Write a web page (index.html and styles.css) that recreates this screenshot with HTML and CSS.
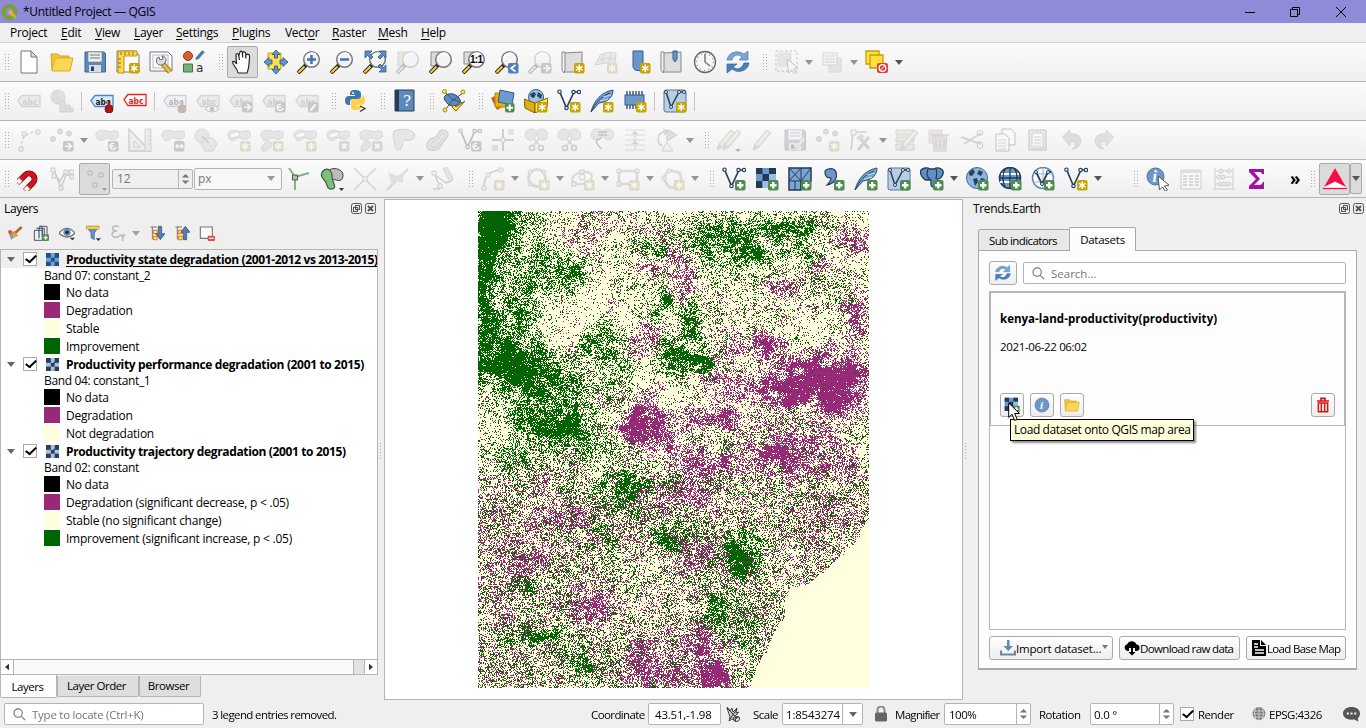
FILE: index.html
```html
<!DOCTYPE html>
<html lang="en">
<head>
<meta charset="utf-8">
<title>*Untitled Project — QGIS</title>
<link rel="stylesheet" href="styles.css">
</head>
<body>
<div class="window">
  <header class="titlebar">
    <svg class="logo" viewBox="0 0 18 18"><circle cx="8.500" cy="9" r="6" fill="none" stroke="#7a9f35" stroke-width="4"/><path d="M9 9l3 0 4 5-2 2-5-4z" fill="#a8b83c"/><path d="M7.500 7l4.500 1-1 1.500 3 3-1.500 1.500-3-3L8 12z" fill="#f0a64c"/></svg>
    <span class="caption">*Untitled Project — QGIS</span>
    <svg class="winbtns" viewBox="0 0 110 20"><path d="M5 10.500h10" stroke="#000"/><path d="M50.500 7.500h7v7h-7zM52.500 7v-1.500h7v7h-1.500" fill="none" stroke="#000"/><path d="M96 5l10 10M106 5l-10 10" stroke="#000"/></svg>
  </header>
  <nav class="menubar">
    <span class="m1">Pro<u>j</u>ect</span><span class="m2"><u>E</u>dit</span><span class="m3"><u>V</u>iew</span><span class="m4"><u>L</u>ayer</span><span class="m5"><u>S</u>ettings</span><span class="m6"><u>P</u>lugins</span><span class="m7">Vect<u>o</u>r</span><span class="m8"><u>R</u>aster</span><span class="m9"><u>M</u>esh</span><span><u>H</u>elp</span>
  </nav>
  <div class="toolbar" data-items="| new open save layout+n wrench style | !hand pan zin zout zfull ~zsel zlayer znat zlast+l ~zlast+r map+n ~mesh+n mark+n book clock refresh | ~select v ~form v desel v"></div>
  <div class="toolbar" data-items="| ~label ~diagram / labpin labred / ~labpin ~labeye ~label+r ~label+c ~label+p | python | help | topo | dsm gpkg+n vec+n feather+n chip+n / shp+n /"></div>
  <div class="toolbar" data-items="| ~curve ~points+r v ~blob+c ~ruler ~blob+m ~simplify ~ring+n ~part+n ~ring+n ~ring+x ~part+x ~reshape ~offset ~vec+c ~splitx ~cut ~cut ~merge ~align ~rotate v | ~pencils ~pencil ~saveedit ~points+n ~vertex v ~attrs ~trash2 ~scissors ~copy ~paste ~undo ~redo"></div>
  <div class="toolbar last">
    <div class="tools" data-items="| magnet ~vsnap !dots"></div>
    <div class="spin tol">12<svg class="updown" viewBox="0 0 14 18"><path d="M3 7.500l4-4 4 4zM3 10.500l4 4 4-4z"/></svg></div>
    <div class="combo unit">px<svg viewBox="0 0 8 5"><path d="M0 0h8L4 5z"/></svg></div>
    <div class="tools" data-items="tracing green ~cross ~avoid v ~selftrace"></div>
    <div class="tools shift" data-items="| ~arc+n v ~circle+n v ~ellipse+n v ~rect+n v ~poly+n v | vec+a raster+a meshl+a comma+a feather+a shp+a elephant+a v globe+a wms+a wfs+a vec+n v"></div>
    <div class="tools info" data-items="| identify ~table ~abacus sigma"></div>
    <span class="more">»</span>
    <div class="tools" data-items="| !trends"></div>
    <div class="drop"><svg viewBox="0 0 8 5"><path d="M0 0h8L4 5z"/></svg></div>
  </div>

  <main class="main">
    <section class="left">
      <div class="dockhead"><span>Layers</span><svg class="dockbtns" viewBox="0 0 26 12"><rect x=".5" y=".5" width="10" height="10" rx="2"/><rect x="4.500" y="2.500" width="4" height="4"/><rect x="2.500" y="4.500" width="4" height="4"/><rect x="14.500" y=".5" width="10" height="10" rx="2"/><path d="M17 3l5 5M22 3l-5 5" stroke-width="2"/></svg></div>
      <div class="minibar" data-mini="brush addgroup eye filter ~eps v expand collapse remove"></div>
      <div class="tree">
        <div class="rows">
          <div class="layer current"><i class="tw"></i><i class="chk"></i><i class="ras b"></i><b class="l1"><u>Productivity state degradation (2001-2012 vs 2013-2015)</u></b></div>
          <div class="band">Band 07: constant_2</div>
          <div class="entry"><i class="k"></i>No data</div><div class="entry"><i class="p"></i>Degradation</div><div class="entry"><i class="y"></i>Stable</div><div class="entry"><i class="g"></i>Improvement</div>
          <div class="layer"><i class="tw"></i><i class="chk"></i><i class="ras"></i><b class="l2">Productivity performance degradation (2001 to 2015)</b></div>
          <div class="band">Band 04: constant_1</div>
          <div class="entry"><i class="k"></i>No data</div><div class="entry"><i class="p"></i>Degradation</div><div class="entry"><i class="y"></i>Not degradation</div>
          <div class="layer"><i class="tw"></i><i class="chk"></i><i class="ras"></i><b class="l3">Productivity trajectory degradation (2001 to 2015)</b></div>
          <div class="band">Band 02: constant</div>
          <div class="entry"><i class="k"></i>No data</div><div class="entry"><i class="p"></i>Degradation (significant decrease, p &lt; .05)</div><div class="entry"><i class="y"></i>Stable (no significant change)</div><div class="entry"><i class="g"></i>Improvement (significant increase, p &lt; .05)</div>
        </div>
        <div class="hscroll"><svg viewBox="0 0 5 8"><path d="M5 0v8L0 4z"/></svg><span></span><em></em><svg viewBox="0 0 5 8"><path d="M0 0v8l5-4z"/></svg></div>
      </div>
      <div class="tabs-bottom"><span class="on">Layers</span><span class="lo">Layer Order</span><span class="br">Browser</span></div>
    </section>
    <div class="splitter"></div>
    <section class="mapview"><canvas id="map" width="391" height="477"></canvas></section>
    <div class="splitter wide"></div>
    <section class="right">
      <div class="dockhead"><span>Trends.Earth</span><svg class="dockbtns" viewBox="0 0 26 12"><rect x=".5" y=".5" width="10" height="10" rx="2"/><rect x="4.500" y="2.500" width="4" height="4"/><rect x="2.500" y="4.500" width="4" height="4"/><rect x="14.500" y=".5" width="10" height="10" rx="2"/><path d="M17 3l5 5M22 3l-5 5" stroke-width="2"/></svg></div>
      <div class="tabs-top"><span class="sub">Sub indicators</span><span class="on">Datasets</span></div>
      <div class="pane">
        <div class="searchrow">
          <button class="btn refresh" data-icon="refresh"></button>
          <div class="field search"><svg viewBox="0 0 14 14"><circle cx="5.500" cy="5.500" r="4.500"/><path d="M9 9l4 4"/></svg>Search...</div>
        </div>
        <div class="list">
          <article class="card">
            <h3>kenya-land-productivity(productivity)</h3>
            <p>2021-06-22 06:02</p>
            <div class="actions">
              <button class="btn sq" data-icon="raster+a"></button><button class="btn sq" data-icon="infoc"></button><button class="btn sq" data-icon="open"></button><button class="btn sq del" data-icon="trashred"></button>
              <div class="tip">Load dataset onto QGIS map area</div>
              <svg class="cursor" viewBox="0 0 13 20"><path d="M.7 1v14.500l3.400-3.200 2.500 6.200 2.600-1.100-2.500-5.900h4.700z" fill="#fff" stroke="#000"/></svg>
            </div>
          </article>
        </div>
        <div class="btnrow">
          <button class="btn b1"><svg viewBox="0 0 16 16"><path d="M7 0h2.500v6H13L8.200 11 3.500 6H7z" fill="#5a8abf"/><path d="M1 10.500v4h14v-4" fill="none" stroke="#6b87a8" stroke-width="2.200"/></svg><span>Import dataset...</span><i class="arr"></i></button>
          <button class="btn b2"><svg viewBox="0 0 16 16"><path d="M3.500 11a3.500 3.500 0 01-.3-6.800A5 5 0 0112.500 4.500a3.300 3.300 0 01.5 6.500H11V8H5v3z"/><path d="M7 8h2v4h2.500L8 15.500 4.500 12H7z"/></svg><span>Download raw data</span></button>
          <button class="btn b3"><svg viewBox="0 0 16 16"><path d="M1 0h8v6h6v10H1zM10 0l5 5h-5z"/><path d="M3 4h4M3 7h4M4 10h9M4 13h9" stroke="#fff" stroke-width="1.300"/></svg><span>Load Base Map</span></button>
        </div>
      </div>
    </section>
  </main>

  <footer class="status">
    <div class="field locate"><svg viewBox="0 0 14 14"><circle cx="5.500" cy="5.500" r="4.500"/><path d="M9 9l4 4"/></svg>Type to locate (Ctrl+K)</div>
    <span class="msg">3 legend entries removed.</span>
    <span class="lb coord">Coordinate</span><div class="field f1">43.51,-1.98</div>
    <svg class="extents" viewBox="0 0 16 16"><path d="M2 2l3 3 2-3 1 4 4-4-1 5 3-1-4 4 4 1-4 1 1 3-4-2-3 2 1-4z" fill="#ccc" stroke="#333" stroke-width=".9"/><path d="M2 1l10 12M12 3L5 13" stroke="#333"/><path d="M9 11a3 3 0 105 0" fill="none" stroke="#333"/></svg>
    <span class="lb scale">Scale</span><div class="field f2">1:8543274<em><svg viewBox="0 0 8 5"><path d="M0 0h8L4 5z"/></svg></em></div>
    <svg class="lock" viewBox="0 0 12 16"><path d="M2.500 7V4a3.500 3.500 0 017 0v3" fill="none" stroke="#888" stroke-width="2"/><rect y="6.500" width="12" height="9" rx="1.500" fill="#666"/></svg>
    <span class="lb mag">Magnifier</span><div class="spin f3">100%<svg class="updown" viewBox="0 0 14 18"><path d="M3 7.500l4-4 4 4zM3 10.500l4 4 4-4z"/></svg></div>
    <span class="lb rot">Rotation</span><div class="spin f4">0.0 °<svg class="updown" viewBox="0 0 14 18"><path d="M3 7.500l4-4 4 4zM3 10.500l4 4 4-4z"/></svg></div>
    <i class="chk"></i><span class="lb render">Render</span>
    <svg class="crs" viewBox="0 0 16 16"><circle cx="8" cy="7.500" r="6.500" fill="#777"/><path d="M1 5h14M0 8h16M2 11h12M8 1v14M5 1.500q-3 6 0 12M11 1.500q3 6 0 12" fill="none" stroke="#ddd" stroke-width=".8"/></svg>
    <span class="lb epsg">EPSG:4326</span>
    <svg class="bubble" viewBox="0 0 16 16"><path d="M8 1c4.500 0 8 2.500 8 6 0 2-1 3.500-2 4.500l.5 3-4-1.800C4.500 13.500 0 11 0 7c0-3.500 3.500-6 8-6z" fill="#555"/><path d="M3.500 7h2M7 7h2M10.500 7h2" stroke="#eee" stroke-width="2"/></svg>
  </footer>
</div>
<script src="app.js"></script>
</body>
</html>
```
FILE: styles.css
```css
* { box-sizing: border-box; }
body { margin: 0; font: 12px/16px "Open Sans", "Noto Sans", sans-serif; color: #000; background: #efefef; overflow: hidden; }
u { text-underline-offset: 2px; }
.window { width: 1366px; height: 728px; display: flex; flex-direction: column; }
.titlebar { height: 23px; background: #8f8bd8; display: flex; align-items: center; flex: none; }
.logo { width: 18px; height: 18px; margin-left: 1px; }
.caption { margin-left: 4px; letter-spacing: -.32px; }
.winbtns { width: 110px; height: 20px; margin-left: auto; margin-right: 16px; }
.menubar { height: 20px; flex: none; border-bottom: 1px solid #d3d3d3; display: flex; align-items: center; padding-left: 10px; letter-spacing: -.28px; }
.menubar span { white-space: nowrap; }
.m1 { width: 51px; } .m2 { width: 34px; } .m3 { width: 39px; } .m4 { width: 42px; } .m5 { width: 56px; }
.m6 { width: 53px; } .m7 { width: 47px; } .m8 { width: 46px; } .m9 { width: 43px; }
.toolbar { height: 39px; flex: none; margin: 0; padding-left: 0; border-bottom: 1px solid #b5b5b5; background: linear-gradient(#fbfbfb, #efefef); display: flex; align-items: center; overflow: hidden; }
.toolbar.last { height: 38px; }
.tools { display: flex; align-items: center; flex: none; }
.handle { width: 16px; height: 18px; flex: none; display: flex; justify-content: center; padding-left: 4px; }
.handle::after { content: ""; width: 5px; height: 17px; background: radial-gradient(circle, #aaa 0 .7px, transparent 1px) 0 0 / 3px 3px; }
.toolbar > .handle:first-child, .tools:first-child > .handle:first-child { margin-left: -4px; }
.slot { width: 33px; height: 32px; flex: none; display: flex; align-items: center; justify-content: center; }
.slot.on { width: 31px; margin: 0 1px; background: #dbdbdb; border: 1px solid #aaa; border-radius: 2px; }
.slot svg { width: 24px; height: 24px; }
.slot.off svg { opacity: .3; filter: grayscale(.6); }
.arrow { width: 12px; flex: none; display: flex; justify-content: center; }
.arrow svg, .drop svg { width: 8px; height: 5px; fill: #555; }
.arrow.off svg { opacity: .6; }
.sep { width: 7px; height: 19px; flex: none; display: flex; justify-content: center; }
.sep::after { content: ""; width: 1px; background: #c4c4c4; }
.spin, .combo, .field { border: 1px solid #b4b4b4; border-radius: 2px; background: #fff; display: flex; align-items: center; white-space: nowrap; flex: none; }
.updown { width: 14px; height: 18px; fill: #777; margin-left: auto; border-left: 1px solid #b4b4b4; flex: none; }
.tol { width: 81px; height: 20px; margin-left: 1px; background: #efefef; color: #777; padding-left: 4px; }
.unit { width: 88px; height: 22px; margin-left: 1px; color: #777; padding: 0 6px 0 3px; background: #f7f7f7; justify-content: space-between; }
.unit svg { width: 8px; height: 5px; fill: #999; }
.shift { margin-left: 1px; }
.info { margin-left: 21px; }
.more { width: 29px; padding-left: 17px; font-size: 17px; font-weight: 700; flex: none; line-height: 12px; }
.drop { width: 12px; height: 31px; margin-left: -1px; background: #dbdbdb; border: 1px solid #aaa; border-radius: 2px; display: flex; align-items: center; justify-content: center; }

.main { flex: 1; display: flex; min-height: 0; }
.left { width: 378px; display: flex; flex-direction: column; flex: none; }
.dockhead { height: 22px; display: flex; align-items: center; justify-content: space-between; flex: none; padding: 0 1px 0 4px; letter-spacing: -.35px; }
.dockbtns { width: 26px; height: 12px; fill: none; stroke: #555; }
.minibar { height: 29px; display: flex; align-items: center; padding: 0 0 3px 3px; flex: none; }
.minibar svg { width: 16px; height: 16px; margin: 0 5px 0 4px; flex: none; }
.minibar svg:nth-child(-n+4) { margin-right: 6px; }
.minibar .off { opacity: .35; margin-right: 0; }
.minibar .arrow { width: 11px; margin: 0 4px 0 3px; }
.minibar .arrow svg { width: 8px; height: 5px; margin: 0; opacity: .5; }
.tree { border: 1px solid #b5b5b5; background: #fff; height: 426px; display: flex; flex-direction: column; overflow: hidden; flex: none; }
.rows { flex: 1; overflow: hidden; }
.layer { height: 18px; display: flex; align-items: center; white-space: nowrap; }
.layer.current { background: #efefef; }
.layer b { margin-left: 7px; flex: none; padding-top: 2px; }
.l1, .l3 { letter-spacing: -.36px; } .l2 { letter-spacing: -.35px; }
.tw { margin-left: 6px; border: 4px solid transparent; border-top: 5px solid #666; border-bottom: 0; flex: none; }
.chk { width: 14px; height: 14px; border: 1px solid #aaa; background: #fff; margin-left: 8px; flex: none; display: block; }
.chk::after { content: ""; display: block; width: 4px; height: 8px; margin: 0 0 0 4px; border: solid #000; border-width: 0 2px 2px 0; transform: rotate(38deg) skewX(-8deg); }
.ras { width: 13px; height: 13px; margin-left: 9px; flex: none; background: conic-gradient(#a9c2e2 25%, #2c3e57 0 50%, #a9c2e2 0 75%, #2c3e57 0) 0 0 / 8.670px 8.670px; }
.ras.b { background-image: conic-gradient(#6ba3dc 25%, #24507e 0 50%, #6ba3dc 0 75%, #24507e 0); }
.band { height: 15px; line-height: 15px; padding-left: 43px; letter-spacing: -.35px; }
.entry { height: 18px; display: flex; align-items: center; padding: 2px 0 0 43px; letter-spacing: -.25px; white-space: nowrap; }
.entry i { width: 16px; height: 16px; margin: -2px 6px 0 0; }
.k { background: #000; } .p { background: #992878; } .y { background: #ffffdf; } .g { background: #006400; }
.hscroll { height: 15px; border-top: 1px solid #b5b5b5; display: flex; align-items: center; background: #fff; }
.hscroll svg { width: 4px; height: 8px; margin: 0 4px; fill: #333; }
.hscroll span { flex: 1; height: 14px; border: 1px solid #b5b5b5; border-width: 0 1px; background: #fafafa; }
.hscroll em { width: 11px; height: 14px; background: #e2e2e2; border-right: 1px solid #b5b5b5; }
.tabs-bottom { display: flex; align-items: flex-start; letter-spacing: -.45px; height: 23px; padding-top: 1px; flex: none; }
.tabs-bottom span { border: 1px solid #b5b5b5; border-top: 0; background: #dedede; height: 21px; text-align: center; padding-top: 2px; border-radius: 0 0 2px 2px; font-size: 11.500px; }
.tabs-bottom .on { background: #fdfdfd; width: 57px; height: 23px; padding: 4px 2px 0 0; margin-top: -1px; }
.tabs-bottom .lo { width: 82px; padding-right: 3px; } .tabs-bottom .br { width: 62px; padding-right: 3px; }
.splitter { width: 6px; background: radial-gradient(circle, #aaa 0 .7px, transparent 1px) 1px 1px / 3px 3px; background-clip: content-box; padding: 245px 2px 241px 1px; flex: none; }
.splitter.wide { width: 7px; }
.mapview { width: 579px; height: 501px; margin-top: 1px; border: 1px solid #b5b5b5; background: #fff; flex: none; padding: 11px 0 0 93px; }
#map { display: block; image-rendering: pixelated; }
.right { flex: 1; display: flex; flex-direction: column; }
.right .dockhead { padding: 0 0 0 3px; }
.right .dockbtns { margin-right: 1px; }
.tabs-top { display: flex; align-items: flex-end; height: 31px; padding-left: 8px; margin-bottom: -1px; z-index: 1; letter-spacing: -.25px; }
.tabs-top span { border: 1px solid #a9a9a9; border-radius: 2px 2px 0 0; text-align: center; background: #e8e8e8; height: 22px; padding-top: 3px; font-size: 11.500px; }
.tabs-top .sub { width: 92px; padding-right: 2px; letter-spacing: -.6px; }
.tabs-top .on { width: 67px; height: 24px; background: #fdfdfd; border-bottom: 0; margin-left: -1px; padding-top: 4px; }
.pane { width: 379px; height: 420px; margin-left: 8px; border: 1px solid #a9a9a9; border-bottom-width: 2px; background: #fdfdfd; padding: 10px 10px 8px; display: flex; flex-direction: column; }
.btn { border: 1px solid #aaa; border-radius: 3px; background: linear-gradient(#fff, #ededed); display: flex; align-items: center; padding: 0; font: inherit; color: #000; }
.searchrow { display: flex; align-items: center; gap: 6px; height: 24px; }
.refresh { width: 28px; height: 24px; justify-content: center; }
.refresh svg { width: 16px; height: 16px; }
.search { flex: 1; height: 22px; color: #777; font-size: 11.500px; padding-top: 1px; }
.field > svg:first-child { width: 13px; height: 13px; fill: none; stroke: #777; stroke-width: 1.200; margin: 0 6px 0 8px; }
.list { margin-top: 6px; height: 339px; border: 1px solid #b5b5b5; background: #fff; }
.card { height: 135px; margin: -1px; border: 2px solid #b5b5b5; border-bottom-width: 1px; background: #fdfdfd; padding: 18px 9px 0; }
.card h3 { margin: 0; font-size: 11.500px; line-height: 16px; letter-spacing: .02px; }
.card p { margin: 12px 0 0; font-size: 11.500px; letter-spacing: -.35px; }
.actions { display: flex; gap: 6px; margin-top: 38px; position: relative; }
.sq { width: 24px; height: 24px; justify-content: center; }
.sq svg { width: 16px; height: 16px; }
.del { margin-left: auto; }
.tip { position: absolute; left: 10px; top: 26px; width: 184px; height: 22px; border: 1px solid #000; background: #ffffdc; padding: 2px 3px; white-space: nowrap; box-shadow: 2px 2px 2px rgba(0,0,0,.45); letter-spacing: -.4px; }
.cursor { position: absolute; left: 8px; top: 9px; width: 13px; height: 20px; }
.btnrow { display: flex; gap: 6px; margin-top: 6px; }
.btnrow .btn { height: 24px; font-size: 11.500px; letter-spacing: -.2px; white-space: nowrap; padding-top: 1px; }
.btnrow svg { width: 16px; height: 16px; flex: none; margin-top: -1px; }
.btnrow .b1 { width: 124px; padding-left: 10px; }
.btnrow .b2 { width: 121px; padding-left: 4px; letter-spacing: -.65px; }
.btnrow .b3 { width: 100px; padding-left: 4px; letter-spacing: -.65px; }
.arr { border: 3px solid transparent; border-top: 4px solid #777; border-bottom: 0; margin: -3px 0 0 1px; }

.status { height: 26px; flex: none; display: flex; align-items: flex-start; padding: 1px 0 0 4px; font-size: 11.500px; letter-spacing: -.2px; line-height: 16px; }
.status > * { flex: none; white-space: nowrap; }
.status .field, .status .spin { height: 22px; padding-top: 1px; }
.status > span { padding-top: 4px; letter-spacing: -.5px; }
.status .locate { width: 200px; color: #777; letter-spacing: -.25px; }
.status .msg { width: 379px; margin-left: 8px; letter-spacing: -.62px; }
.status .coord { width: 57px; letter-spacing: -.6px; } .f1 { width: 73px; padding-left: 6px; }
.extents { width: 16px; height: 16px; margin: 3px 0 0 4px; }
.scale { margin-left: 12px; width: 29px; }
.f2 { width: 81px; padding-left: 3px; }
.f2 em { margin-left: auto; width: 20px; height: 20px; border-left: 1px solid #b4b4b4; display: flex; align-items: center; justify-content: center; margin-top: -1px; }
.f2 em svg { width: 8px; height: 5px; fill: #666; }
.lock { width: 12px; height: 16px; margin: 3px 0 0 12px; }
.status .mag { margin-left: 8px; width: 49px; letter-spacing: -.7px; } .f3 { width: 87px; padding-left: 4px; letter-spacing: -.5px; }
.status .updown { height: 20px; margin-top: -1px; }
.rot { margin-left: 8px; width: 51px; } .f4 { width: 84px; padding-left: 3px; }
.status > .chk { margin: 4px 0 0 6px; }
.render { margin-left: 4px; width: 53px; }
.crs { width: 16px; height: 16px; margin-top: 3px; }
.epsg { margin-left: 2px; width: 74px; }
.bubble { width: 17px; height: 17px; margin-top: 3px; }
```
FILE: app.js
```js
const glass = '<path d="M1 23l8-8" stroke="#222" stroke-width="4"/><path d="M1.500 22.500l6-6" stroke="#fc3" stroke-width="2.200"/><circle cx="14.500" cy="9.500" r="7.800" fill="#f3f3f3" stroke="#777" stroke-width="1.500"/><path d="M9 8a6 6 0 0110-3" fill="none" stroke="#fff" stroke-width="2"/>';
const tag = (c, bg, t = '') => `<path d="M1 11.500l4-5h18v11H5z" fill="${bg}" stroke="${c}" stroke-width="1.300"/><text x="5.500" y="15.500" font-size="9.500" font-weight="700" fill="${t || c}" font-family="DejaVu Sans" textLength="15" lengthAdjust="spacingAndGlyphs">abc</text>`;
const pin = '<path d="M19 12v7" stroke="#999" stroke-width="4"/><circle cx="19" cy="20" r="4" fill="#b3131c" stroke="#7c1015"/><path d="M19 12v6" stroke="#b3131c" stroke-width="2"/>';
const blob = '<path d="M1 8C0 3 6 1 11 3s9-2 12 1-1 9-7 7-4-1-8 1-6-1-7-4z" fill="#b9c2b9" stroke="#8c948c"/>';
const vec = '<path d="M2.500 2.500L9.500 19 17 3h5" fill="none" stroke="#27425f" stroke-width="1.700"/><g fill="#fff" stroke="#27425f" stroke-width="1.200"><circle cx="2.500" cy="2.700" r="1.700"/><circle cx="9.500" cy="19" r="1.700"/><circle cx="16.500" cy="3" r="1.700"/><circle cx="22" cy="3" r="1.700"/></g>';
const floppy = '<path d="M2 2h19l1.500 1.500V22H2z" fill="#5b8abd" stroke="#3c6492"/><path d="M5 2h14v10H5z" fill="#eee" stroke="#777" stroke-width=".6"/><path d="M7 5h10M7 8h10" stroke="#777"/><path d="M6 15h12v7H6z" fill="#ddd"/><path d="M8 16.500h3V21H8z" fill="#27425f"/>';
const folder = '<path d="M2 20L1 4h7l2 2h9v3" fill="#f2c73c" stroke="#d3a21c"/><path d="M2 20L5 8h18l-3 13H2z" fill="#fcd755" stroke="#d9aa27"/>';
const pencil = '<path d="M3 22l2-6L17 2l4 3L9 19z" fill="#cfc9a3" stroke="#8c8770"/><path d="M3 22l2-6 4 3z" fill="#a98"/><path d="M7 17L18 4" stroke="#fff"/>';
const scroll = '<path d="M3 3v19h18V2z" fill="#ddd" stroke="#888"/><path d="M1 2h3v18l-1 3-2-3z" fill="#f4f4f4" stroke="#888"/>';
const cursor = '<path d="M12 9l11 9-4.500 1 3 4-2 1.500-3-4.500-3 3z" fill="#fff" stroke="#555"/>';
const sheet = '<path d="M4 1h10l6 6v16H4z" fill="#fff" stroke="#777"/><path d="M14 1v6h6z" fill="#ddd" stroke="#777"/>';
const feather = '<path d="M1 23C4 11 12 3 23 1c0 7-5 12-14 13z" fill="#78a3d4" stroke="#315277"/><path d="M1 23C5 14 12 7 20 4" fill="none" stroke="#27425f"/><path d="M10 12l8-2M13 8l8-2" stroke="#c5daf0"/>';
const scissorsTail = '<path d="M10 11l5 6M15 11l-5 6" stroke="#888" stroke-width="1.500"/><circle cx="8" cy="20" r="2.500" fill="none" stroke="#a66" stroke-width="1.500"/><circle cx="17" cy="20" r="2.500" fill="none" stroke="#a66" stroke-width="1.500"/>';
const lobes = '<path d="M12 8c-2 5-8 5-10 2S1 1 7 1s6 3 5 7zM13 8c2 5 8 5 10 2s0-9-5-9-6 3-5 7z" fill="#b9c2b9" stroke="#8c948c"/>';
const lines = (y0, n, x0 = 8, x1 = 17, step = 3) => `<path d="${Array.from({ length: n }, (_, i) => `M${x0} ${y0 + i * step}H${x1}`).join('')}" stroke="#888"/>`;
const globeShape = '<circle cx="12" cy="11" r="10.500" fill="#8fb4dd" stroke="#416c9b"/>';

const ICONS = {
  new: sheet, open: folder, save: floppy, vec, feather, pencil,
  layout: '<path d="M1 1h18l4 4v17H1z" fill="#fff" stroke="#777"/><path d="M2 1h19v5H8v17H2z" fill="#ffd84c" stroke="#b79313"/><path d="M5 2v3M9 2v3M13 2v3M17 2v3M2 9h3M2 13h3M2 17h3" stroke="#8a6f10"/>',
  wrench: '<path d="M1 2h18l4 4v15H1z" fill="#fff" stroke="#777"/><path d="M4 5h15v13H4z" fill="none" stroke="#9db9da"/><path d="M14 14l7 8" stroke="#a77b00" stroke-width="5"/><path d="M14 14l7 8" stroke="#e3bf4d" stroke-width="3"/><path d="M8 8l2-1 1 3 3-1-1-3c4 0 5 4 3 7l-3 2c-4 1-7-3-5-7z" fill="#ddd" stroke="#666"/>',
  style: '<circle cx="6" cy="6" r="4.500" fill="#d26132" stroke="#973d19"/><path d="M1.500 14h9v8h-9z" fill="#77ae7a" stroke="#3e7542"/><path d="M13 10l3-3 5-6 2 1-6 7z" fill="#5d8dc1"/><path d="M21 1l-7 8" stroke="#47759f" stroke-width="2"/><text x="14" y="22" font-size="12" fill="#333" font-family="DejaVu Sans">a</text>',
  hand: '<path d="M7 23c0-4-5-7-5.500-11 1-1.500 2.500-.5 4 2L5 5c0-2 2.200-2 2.500 0L9 10 8.800 2.500c0-2 2.400-2 2.600 0L12 10l.5-7c.2-2 2.500-1.800 2.500.2L15 11l1.300-5c.5-1.800 2.500-1.300 2.300.5-.6 5-.2 11-2.600 16.500z" fill="#fff"/><path d="M7 23c0-4-5-7-5.500-11 1-1.500 2.500-.5 4 2L5 5c0-2 2.200-2 2.500 0l1 5M7.800 5.500l1-3c.4-1.800 2.400-1.700 2.600 0l.3 5M11.500 3c.6-1.700 3.200-1.400 3.300.5v5M15 5c1-1.500 3.700-.8 3.600 1.500-.6 5-.2 11-2.600 16.500H7" fill="none" stroke="#222" stroke-width="1.200"/>',
  pan: '<path d="M4 3h13v16H4z" fill="#ffe04b" stroke="#c2a116"/><path d="M12 0l4 4.500h-2.500V8h-3V4.500H8zM24 12l-5 4.500V14h-3v-4h3V7.500zM12 24l-4-4.500h2.500V16h3v3.500H16zM0 12l5-4.500V10h3v4H5v2.500z" fill="#6596cb" stroke="#315d8b" stroke-width=".9"/>',
  zin: glass + '<path d="M14.500 5v9M10 9.500h9" stroke="#3f74ad" stroke-width="2.500"/>',
  zout: glass + '<path d="M10 9.500h9" stroke="#3f74ad" stroke-width="2.500"/>',
  zfull: glass + '<path d="M2 1h7L6.500 3.500 10 7 8 9 4.500 5.500 2 8zM23 1v7l-2.500-2.500L17 9l-2-2 3.500-3.500L16 1zM23 22h-7l2.500-2.500L15 16l2-2 3.500 3.500L23 15z" fill="#5c8dc3" stroke="#2e5986" stroke-width=".8"/>',
  zsel: '<path d="M2 2h10v14H2z" fill="#cfc870" stroke="#888"/>' + glass,
  zlayer: '<path d="M2 2h10v14H2z" fill="#ddd" stroke="#888"/>' + glass,
  znat: '<path d="M2 2h10v12H2z" fill="#ddd" stroke="#888"/>' + glass + '<text x="8" y="13" font-size="10" font-weight="700" font-family="Liberation Sans" textLength="13">1:1</text>',
  zlast: glass, map: scroll,
  mesh: '<path d="M1 15L6 5l8-3 8 1-1 12-9-2z" fill="#ccc" stroke="#888"/><path d="M4 10l9-2 9 1M10 3l-2 11M17 3l-2 11" stroke="#888" fill="none"/>',
  mark: '<path d="M6 1h10v16l-2 4-6-1-2-3z" fill="#6797ca" stroke="#315d8b"/>',
  book: scroll + '<path d="M13 1h4v8l-2 3-2-3z" fill="#6797ca" stroke="#315d8b"/>',
  clock: '<circle cx="12" cy="12" r="10.500" fill="#f6f6f6" stroke="#666" stroke-width="1.300"/><circle cx="12" cy="12" r="8.500" fill="none" stroke="#6797ca" stroke-width="1.500" stroke-dasharray="1 3.450"/><path d="M12 4v8l5 4" fill="none" stroke="#777" stroke-width="1.500"/>',
  refresh: '<path d="M1 10C2 3 11-1 18 4l4-3v9h-9l3-3C11 3 7 6 6 10z" fill="#78a5d6" stroke="#4d7cb0" stroke-width=".7"/><path d="M23 13c-1 8-11 11-17 6l-5 4v-9h10l-4 3c5 4 9 1 11-4z" fill="#4b80bb" stroke="#35659b" stroke-width=".7"/>',
  select: '<path d="M1 1h21v20H1z" fill="none" stroke="#555" stroke-dasharray="2.500 2"/><path d="M3 3h13v13H3z" fill="#c8c2a0" stroke="#aaa"/>' + cursor,
  form: '<path d="M9 8h12v14H9z" fill="#cbc59d" stroke="#999"/><path d="M3 3h14v12H3z" fill="#eee" stroke="#888"/>' + lines(6, 3, 5, 15),
  desel: '<path d="M1 1h13v13H1z" fill="#ffe13d" stroke="#c09f0c" stroke-width="1.300"/><path d="M5 5h13v13H5z" fill="#ffe13d" stroke="#c09f0c" stroke-width="1.300"/><rect x="12" y="13" width="11" height="10" rx="2" fill="#e33a3a"/><circle cx="17.500" cy="18" r="3.300" fill="none" stroke="#fff" stroke-width="1.300"/><path d="M15 20.500l5-5" stroke="#fff"/>',
  label: tag('#888', '#d8d5bd', '#777'),
  diagram: '<circle cx="8" cy="8" r="7" fill="#c49a9a" stroke="#888"/><path d="M8 8V1a7 7 0 016 10z" fill="#9ab89d"/><path d="M10 12h5v11h-5zM16 16h4v7h-4zM20 19h3v4h-3z" fill="#aaa" stroke="#888"/>',
  labpin: tag('#4b86c6', '#d9eaff', '#222') + pin,
  labred: '<g transform="translate(0,-1)">' + tag('#e22', '#fff') + '</g>',
  labeye: tag('#888', '#d8d5bd', '#777') + '<path d="M9 20q7-7 14 0-7 6-14 0z" fill="#fff" stroke="#555"/><circle cx="16" cy="20" r="2.300" fill="#555"/>',
  python: '<path d="M11 1c-5 0-5 2-5 5h5v1H4c-4 0-4 9 0 9h2v-3c0-2 1-3 3-3h5c2 0 3-1 3-3V5c0-3-2-4-6-4z" fill="#3b78ab"/><path d="M18 6c4 0 4 10 0 10h-6v1h5c0 3-1 4-5 4s-5-1-5-4v-4c0-2 1-3 3-3h5c2 0 3-1 3-4z" fill="#ffd343"/><circle cx="9" cy="4" r="1" fill="#fff"/><path d="M16 17l5 2.500-5 3" fill="none" stroke="#333" stroke-width="1.300"/>',
  help: '<path d="M2 1h19v21H2z" fill="#5d8abb" stroke="#263d58"/><path d="M2 1h4v21H2z" fill="#263d58"/><text x="10" y="17" font-size="15" fill="#fff" font-family="DejaVu Serif">?</text>',
  topo: '<path d="M4 6c6-3 12 0 14 5s-8 8-12 4-5-7-2-9z" fill="#5c8cc2" stroke="#27425f"/><path d="M2 2l9 9 10-7M11 11L3 21M10 10l10 4" stroke="#39516b" fill="none"/><circle cx="2.500" cy="2.500" r="2" fill="#ffe24b" stroke="#a8901a"/><circle cx="21" cy="3" r="2" fill="#ffe24b" stroke="#a8901a"/><circle cx="3" cy="21" r="2" fill="#ffe24b" stroke="#a8901a"/><path d="M10 18l4 4 9-10-9 6-2-2z" fill="#ffdf3b" stroke="#7b6814"/>',
  dsm: '<path d="M0 9l10-5 6 11-10 6z" fill="#cf5a27"/><path d="M4 4h12v14H4z" fill="#e9b300" stroke="#b88400"/><path d="M9 1l14 3-2 12-14-3z" fill="#6d9aca" stroke="#335c88"/><rect x="14" y="14" width="9.500" height="9.500" rx="2" fill="#508b53"/><path d="M18.750 15.500v6.500M15.500 18.750h6.500" stroke="#fff" stroke-width="2"/>',
  gpkg: '<circle cx="12" cy="8" r="7.500" fill="#9fc1e6" stroke="#315d8b"/><path d="M6 5l4-2 2 2-2 4-3-1zM14 3l4 3-1 4-4-3z" fill="#27425f"/><path d="M0 10l11 4v10L1 19z" fill="#e0ae10" stroke="#7c6207"/><path d="M24 9l-13 5v10l12-6z" fill="#ffe750" stroke="#7c6207"/>',
  chip: '<path d="M4 2v18M7 2v18M10 2v18M13 2v18M16 2v18M19 2v18" stroke="#27425f" stroke-width="1.300"/><rect x="2" y="6" width="19" height="10" fill="#6d97c8" stroke="#315d8b"/>',
  shp: '<rect x="1" y="1" width="22" height="22" rx="2" fill="#b8cee5" stroke="#58799b"/><path d="M3 3l5 15 8-15h5" fill="none" stroke="#27425f" stroke-width="1.500"/><g fill="#fff" stroke="#27425f"><circle cx="3" cy="3" r="1.500"/><circle cx="8" cy="18" r="1.500"/><circle cx="16" cy="3" r="1.500"/><circle cx="21" cy="3" r="1.500"/></g>',
  curve: '<path d="M4 21C4 9 9 4 21 4" fill="none" stroke="#777" stroke-width="1.500" stroke-dasharray="3 2"/><path d="M2 19h4v4H2zM5 4h4v4H5zM19 2h4v4h-4z" fill="#ddd" stroke="#777"/>',
  points: '<g fill="#9aa39a" stroke="#777"><circle cx="3" cy="11" r="2.500"/><circle cx="10" cy="3.500" r="2.500"/><circle cx="19" cy="5.500" r="2.500"/></g>',
  blob,
  ruler: '<path d="M1 1v22h21z" fill="#ddd" stroke="#8b6b5a" stroke-width="1.400"/><path d="M6 13v6h6z" fill="#fff" stroke="#8b6b5a"/><path d="M17 1h6v22h-6z" fill="#ddd5b0" stroke="#888"/><path d="M20 4h3M20 8h3M20 12h3M20 16h3" stroke="#777"/>',
  simplify: '<circle cx="8" cy="8" r="7" fill="#b9c2b9" stroke="#8c948c"/><path d="M11 10h8l4 6-4 7h-8l-4-7z" fill="#c2cbd2" stroke="#848d94"/><path d="M8 8l7 7" stroke="#777" stroke-width="1.500"/>',
  ring: blob + '<ellipse cx="8" cy="6.500" rx="5" ry="2.500" fill="#fff" stroke="#8c948c" transform="rotate(-15 9 8)"/>',
  part: blob + '<path d="M2 20c1-5 6-8 9-6s-2 8-6 9-3-1-3-3z" fill="#b9c2b9" stroke="#8c948c"/>',
  reshape: '<path d="M2 3c6-3 17-2 20 2s-3 9-9 7c-4 0-1 10-7 10C1 22 4 14 1 9z" fill="#bcc5bc" stroke="#777"/><path d="M3 14c4-2 7-1 8 0-1 4-2 8-5 8-4 0-3-4-3-8z" fill="#c6c59d"/>',
  offset: '<path d="M3 14c3-6 8-2 10-8s9-4 10 0-4 5-6 10-6 7-11 6-5-5-3-8z" fill="#c6c59d" stroke="#888" stroke-width="1.500"/><path d="M6 16c2-5 6-2 9-8s6-1 4 2-4 3-6 7-9 3-7-1z" fill="#b9c2b9" stroke="#888"/>',
  splitx: '<path d="M12 1v22M1 12h22" stroke="#777" stroke-width="2"/><path d="M10 10h4v4h-4z" fill="#eee" stroke="#777"/><path d="M17 1h6v6h-6z" fill="#cb9"/><path d="M1 17h6v6H1z" fill="#caa"/>',
  cut: lobes + scissorsTail,
  merge: lobes + '<path d="M8 4h9M8 7h9M12 10c-8 2-7 5 0 11" stroke="#555" fill="none" stroke-width="1.500"/>',
  align: '<path d="M2 2h20M2 7h20M2 12h20M2 17h20M2 22h20" stroke="#999"/><path d="M12 3l4 3H8zM12 13l4 3H8z" fill="#888"/><path d="M12 3v19" stroke="#888"/>',
  rotate: '<path d="M11 2h2l8 5-10 6z" fill="#9eaba3" stroke="#777"/><path d="M10 3C0 5 0 16 7 18M7 1l4 2-3 4" fill="none" stroke="#777" stroke-width="1.300"/><path d="M6 23l5-9 6 9z" fill="#eee" stroke="#888"/>',
  pencils: '<g transform="translate(-3 0)">' + pencil + '</g><g transform="translate(3 0)">' + pencil + '</g><path d="M18 21h6l-3 3z" fill="#333"/>',
  saveedit: floppy + '<g transform="translate(9 8) scale(.65)">' + pencil + '</g>',
  vertex: '<path d="M4 4L2 22M4 4h14" stroke="#777" stroke-width="1.500"/><path d="M2 2h5v5H2z" fill="#eee" stroke="#777"/><path d="M9 22L20 9M10 9l10 12" stroke="#888" stroke-width="3"/><path d="M7 10l5-4 4 3-5 4z" fill="#999"/>',
  attrs: '<path d="M2 2h18v5H2zM2 9h18v5H2zM2 16h18v6H2z" fill="#d1cb9c" stroke="#888"/><g transform="translate(3 0)">' + pencil + '</g>',
  trash2: '<path d="M2 2h13v13H2z" fill="#c9c49e" stroke="#999"/><path d="M6 9h14l-1 14H7z" fill="#cbb" stroke="#a77"/><path d="M4 7h18M9 11v10M13 11v10M17 11v10" stroke="#a77" stroke-width="1.500"/>',
  scissors: '<path d="M1 9l20 7M4 16L21 5" stroke="#888" stroke-width="2"/><ellipse cx="20" cy="5" rx="3" ry="2.500" fill="none" stroke="#966"/><ellipse cx="20" cy="17" rx="3" ry="3.500" fill="none" stroke="#966"/>',
  copy: '<path d="M9 1h9l4 4v12H9z" fill="#fff" stroke="#555"/><path d="M3 6h9l4 4v13H3z" fill="#fff" stroke="#555"/>' + lines(12, 4, 5, 13),
  paste: '<path d="M3 2h17v20H3z" fill="#ddd5bd" stroke="#555"/><path d="M6 5h11v15H6z" fill="#fff" stroke="#777"/><path d="M9 1h6v4H9z" fill="#aaa"/>' + lines(9, 4, 8, 15),
  undo: '<path d="M3 9l8-7v4c9-1 11 3 11 8-1 5-5 7-9 7 4-3 5-8-2-7v4z" fill="#b4a19b" stroke="#998"/>',
  redo: '<path d="M22 9l-8-7v4C5 5 3 9 3 14c1 5 5 7 9 7-4-3-5-8 2-7v4z" fill="#a3b2a7" stroke="#899"/>',
  magnet: '<g transform="rotate(-135 12 12) translate(0 24) scale(1 -1)"><g transform="rotate(180 12 12)"><path d="M4 4v8a8 8 0 0016 0V4h-5v8a3 3 0 01-6 0V4z" fill="#d3131d" stroke="#8d0d13"/><path d="M4 1h5v5H4zM15 1h5v5h-5z" fill="#f4f4f4" stroke="#c33" stroke-width=".8"/></g></g>',
  vsnap: '<path d="M4 3l7 18L16 8h6M5 8l5 6 6-10h6" fill="none" stroke="#666" stroke-width="1.500"/><g fill="#ddd" stroke="#666"><path d="M1 1h4v4H1zM2 7h4v4H2zM9 19h4v4H9zM14 3h4v4h-4zM20 3h4v4h-4zM20 8h4v4h-4z"/></g>',
  dots: '<path d="M5 4h4v4H5zM16 6h4v4h-4zM10 16h4v4h-4z" fill="#ddd" stroke="#b5b5b5"/><path d="M19 21h5l-2.500 3z" fill="#999"/>',
  tracing: '<path d="M2 1l6 9 14-4M8 10v13" fill="none" stroke="#7fb683" stroke-width="2"/><path d="M5.500 8h5v5h-5z" fill="#bbb" stroke="#555"/>',
  green: '<path d="M8 5c2-6 16-4 15 4s-8 3-11 3-5-4-4-7z" fill="#bbb" stroke="#444"/><path d="M3 4c4-4 9-1 9 5s6 12 0 13-4-5-7-8-5-7-2-10z" fill="#7fbf7e" stroke="#3d5a3d" stroke-width="1.200"/><path d="M19 21h5l-2.500 3z" fill="#333"/>',
  cross: '<path d="M1 1l22 22M23 1L1 23" stroke="#888" stroke-width="1.600"/><path d="M10 10h4v4h-4z" fill="#eee" stroke="#888"/>',
  avoid: '<path d="M1 23L22 2" stroke="#888" stroke-width="2"/><path d="M2 5l9 4 7-4-1 11-7-2-4 5z" fill="#b9b28c"/>',
  selftrace: '<path d="M2 22h7M9 19L3 7l12 9 5-2" fill="none" stroke="#777" stroke-width="1.500"/><path d="M12 2l4-2 6 11-1 3-3-1z" fill="#c5bd97" stroke="#888"/><path d="M1 4h4v4H1zM7 17h4v4H7z" fill="#eee" stroke="#777"/>',
  arc: '<path d="M3 21C3 9 8 4 20 3" fill="none" stroke="#888" stroke-width="2"/><path d="M1 19h4v4H1zM5 6h4v4H5zM18 1h4v4h-4z" fill="#ddd" stroke="#888"/>',
  circle: '<circle cx="11" cy="11" r="8.500" fill="none" stroke="#999" stroke-width="3"/><g fill="#ddd" stroke="#777"><circle cx="4" cy="5" r="2"/><circle cx="18" cy="5" r="2"/><circle cx="4" cy="17" r="2"/></g>',
  ellipse: '<ellipse cx="11" cy="11" rx="10" ry="6" fill="none" stroke="#999" stroke-width="2" transform="rotate(-15 11 11)"/><circle cx="11" cy="10" r="3" fill="none" stroke="#777"/><path d="M1 15h4v4H1zM9 3h4v4H9z" fill="#ddd" stroke="#777"/>',
  rect: '<path d="M3 4h18v13H3z" fill="none" stroke="#999" stroke-width="2.500"/><path d="M1 2h4v4H1zM19 2h4v4h-4zM1 15h4v4H1z" fill="#ddd" stroke="#777"/>',
  poly: '<path d="M8 3l11 3 2 9-6 6-7-1-6-9z" fill="none" stroke="#999" stroke-width="2.500"/><circle cx="8" cy="4" r="2" fill="#ddd" stroke="#777"/><circle cx="3" cy="11" r="2" fill="#ddd" stroke="#777"/>',
  raster: '<path d="M1 1h20v20H1z" fill="#6d97c8"/><path d="M1 1h6.500v6H1zM14 1h7v6h-7zM7.500 7H14v7H7.500zM1 14h6.500v7H1z" fill="#223a56"/><path d="M14 7h7v7h-7zM7.500 14H14v7H7.500z" fill="#9dbde0"/>',
  meshl: '<path d="M1 1h22v13H13v9H1z" fill="#7aa4d4" stroke="#223a56" stroke-width="1.500"/><path d="M13 1v22M1 14h22M1 1l12 13M13 1L1 14M23 1L13 14M7 14v9" stroke="#223a56" fill="none"/>',
  comma: '<path d="M4 6c-1-5 9-6 11-1 2 7-3 12-9 13 3-3 4-5 4-7-4 0-6-2-6-5z" fill="#6d97c8" stroke="#223a56" stroke-width="1.200"/>',
  elephant: '<path d="M1 3c2-2 6-3 9-1h4c3-2 8-1 9 2s-2 8-5 8l-1 1v5c-1 3-5 3-6 0v-5H7C3 13-1 6 1 3z" fill="#5f8fc5" stroke="#223a56" stroke-width="1.300"/><path d="M8 2c-1 4-2 8 2 10M16 2c2 5 0 7 0 10" fill="none" stroke="#223a56" stroke-width="1.200"/>',
  globe: globeShape + '<path d="M4 5l4-3 2 3-3 4-3-1zM14 3l4 2-2 4-4-2zM8 12l4-1 1 4-3 4zM16 11l4 1-2 5-3-3z" fill="#27425f"/>',
  wms: '<circle cx="12" cy="11" r="10.500" fill="#6999cd" stroke="#223a56" stroke-width="1.500"/><path d="M3 7h18M2 15h20" stroke="#fff" fill="none" stroke-width="1.800"/><path d="M12 0v22M1 11h22M7 2q-4 9 0 18M17 2q4 9 0 18" fill="none" stroke="#223a56" stroke-width="1.300"/>',
  wfs: '<circle cx="12" cy="11" r="10.500" fill="#fff" stroke="#5b88bb" stroke-width="1.500"/><path d="M2 7h20M2 15h20M12 1v20" stroke="#8cb0da"/><path d="M5 5l6 12 6-12h3" stroke="#27425f" stroke-width="1.800" fill="none"/><g fill="#fff" stroke="#27425f"><circle cx="5" cy="5" r="1.500"/><circle cx="17" cy="5" r="1.500"/><circle cx="11" cy="17" r="1.500"/></g>',
  infoc: '<circle cx="12" cy="12" r="10.500" fill="#6d97c8" stroke="#4b75a4"/><text x="9" y="18" font-size="17" font-style="italic" font-weight="700" fill="#fff" font-family="Liberation Serif">i</text>',
  identify: '<circle cx="9.500" cy="9.500" r="8.500" fill="#6d97c8" stroke="#4b75a4"/><text x="6.500" y="15" font-size="16" font-style="italic" font-weight="700" fill="#fff" font-family="Liberation Serif">i</text>' + cursor,
  table: '<path d="M2 3h20v19H2z" fill="#fff" stroke="#777"/><path d="M2 3h20v3H2z" fill="#aaa"/><path d="M4 9h4M10 9h4M16 9h4M4 12h4M10 12h4M16 12h4M4 15h4M10 15h4M16 15h4M4 18h4M10 18h4M16 18h4" stroke="#777" stroke-width="1.500"/>',
  abacus: '<path d="M3 1v21M21 1v21M1 22h22M3 4h18M3 10h18M3 17h18" stroke="#777"/><g fill="#ddd" stroke="#966"><circle cx="9" cy="4" r="2"/><circle cx="17" cy="4" r="2"/><circle cx="7" cy="10" r="2"/><circle cx="11" cy="10" r="2"/><circle cx="8" cy="17" r="2"/><circle cx="12" cy="17" r="2"/><circle cx="16" cy="17" r="2"/></g>',
  sigma: '<path d="M4 2h15v5h-2q0-2-3-2H9l6 7-6 6h6q2 0 3-3h1v7H4v-3l7-7-7-7z" fill="#a312a3"/>',
  trends: '<path d="M12 1L0 22h24z" fill="#fff"/><path d="M12 1L1 20l11-5.500L23 20z" fill="#fb0b44"/><path d="M0 21.500h24" stroke="#fb0b44" stroke-width="1.300"/>',
  trashred: '<path d="M3 6h18M9 5V2h6v3" fill="none" stroke="#d11" stroke-width="2.500"/><path d="M5 9h14v13H5zM9.500 9v13M14.500 9v13" fill="none" stroke="#d11" stroke-width="2.200"/>',
  brush: '<path d="M1 9l10 2 3 7-8 3z" fill="#f5b52d"/><path d="M1 9l5-2 3 5-5 3z" fill="#e35252"/><path d="M4 15l5-2 1 6-4 3z" fill="#6da1dc"/><path d="M11 13L22 3" stroke="#a86f2d" stroke-width="4"/><path d="M9 10l6 7" stroke="#e29b29" stroke-width="4"/>',
  addgroup: '<path d="M2 8h12v15H2zM5 5h12v15M9 2h12v14" fill="none" stroke="#555" stroke-width="1.500"/><path d="M9 20V5q3-7 5 0v12" fill="none" stroke="#315d8b" stroke-width="1.800"/><rect x="14" y="14" width="10" height="10" rx="2" fill="#508b53"/><path d="M19 16v6M16 19h6" stroke="#fff" stroke-width="2"/>',
  eye: '<path d="M0 12q12-14 24 0-12 12-24 0z" fill="#fff" stroke="#777" stroke-width="2"/><circle cx="12" cy="11" r="5.500" fill="#5d8dc1"/><circle cx="12" cy="11" r="2.500" fill="#222"/><path d="M16 19h8l-4 4z" fill="#333"/>',
  filter: '<path d="M2 2h19l-7 10v10l-5-3v-7z" fill="#6391c5" stroke="#3c6490"/><path d="M2 2h19v4H2z" fill="#ffe04b" stroke="#b79313"/><path d="M16 20h8l-4 4z" fill="#333"/>',
  eps: '<path d="M12 3C6-1 0 4 3 7c1 2 3 2 6 2-9 0-9 8-4 9 3 1 6 0 8-2" fill="none" stroke="#555" stroke-width="2.200"/><path d="M12 14h11l-4 5v5h-3v-5z" fill="#777"/>',
  expand: '<path d="M2 3h10M5 3v18M5 12h6M5 21h6" stroke="#777" stroke-width="1.500"/><path d="M7 8h5v5H7zM7 17h5v5H7z" fill="#fff" stroke="#f80" stroke-width="2"/><path d="M14 2h5v11h5l-7 9-7-9h4z" fill="#5080b5" stroke="#27486d"/>',
  collapse: '<path d="M2 3h10M5 3v18M5 12h6M5 21h6" stroke="#777" stroke-width="1.500"/><path d="M7 8h5v5H7zM7 17h5v5H7z" fill="#fff" stroke="#f80" stroke-width="2"/><path d="M14 22h5V11h5l-7-9-7 9h4z" fill="#5080b5" stroke="#27486d"/>',
  remove: '<path d="M2 3h18v17H2z" fill="#fafafa" stroke="#777" stroke-width="1.700"/><rect x="13" y="16" width="11" height="8" rx="2" fill="#e44"/><path d="M15 20h7" stroke="#fff" stroke-width="2"/>'
};

const box = (fill, glyph) => `<rect x="13" y="13" width="10.500" height="10.500" rx="1.800" fill="${fill}"/>${glyph}`;
const BADGES = {
  n: box('#c9a300', '<path d="M18.250 14.500v7.500M15 16.400l6.500 3.700M21.500 16.400l-6.500 3.700" stroke="#fff" stroke-width="1.500"/>'),
  a: box('#4f8c51', '<path d="M18.250 15v6.500M15 18.250h6.500" stroke="#fff" stroke-width="2.300"/>'),
  l: box('#4a80bb', '<path d="M20.500 15l-4.500 3.250 4.500 3.250" fill="none" stroke="#fff" stroke-width="1.700"/>'),
  r: box('#666', '<path d="M15 18.250h6M18 15l3.500 3.250L18 21.500" fill="none" stroke="#fff" stroke-width="1.700"/>'),
  c: box('#666', '<path d="M21 19a3 3 0 11-2-3.500M16 21v-3h3" fill="none" stroke="#fff" stroke-width="1.500"/>'),
  p: box('#666', '<path d="M15.500 21.500l5-6" stroke="#fff" stroke-width="2"/>'),
  m: box('#666', '<path d="M15 18.250h7M17 16l-2 2.250 2 2.250M20 16l2 2.250-2 2.250" fill="none" stroke="#fff" stroke-width="1.400"/>'),
  x: box('#b88', '<path d="M16 16l4.500 4.500M20.500 16L16 20.500" stroke="#fff" stroke-width="1.800"/>')
};

function draw(token, cls = '') {
  const [name, badge] = token.split('+');
  return `<svg class="${cls}" viewBox="0 0 24 24">${ICONS[name]}${badge ? BADGES[badge] : ''}</svg>`;
}
const ARROW = '<svg viewBox="0 0 8 5"><path d="M0 0h8L4 5z"/></svg>';

document.querySelectorAll('[data-items]').forEach(bar => {
  let off = false;
  bar.innerHTML = bar.dataset.items.split(' ').map(t => {
    if (t === '|') return '<div class="handle"></div>';
    if (t === '/') return '<div class="sep"></div>';
    if (t === 'v') return `<div class="arrow ${off ? 'off' : ''}">${ARROW}</div>`;
    off = t[0] === '~';
    const on = t[0] === '!';
    return `<div class="slot ${off ? 'off' : ''} ${on ? 'on' : ''}">${draw(off || on ? t.slice(1) : t)}</div>`;
  }).join('');
});
document.querySelectorAll('[data-mini]').forEach(bar => {
  bar.innerHTML = bar.dataset.mini.split(' ').map(t =>
    t === 'v' ? `<div class="arrow">${ARROW}</div>` : t[0] === '~' ? draw(t.slice(1), 'off') : draw(t)).join('');
});
document.querySelectorAll('[data-icon]').forEach(b => { b.innerHTML = draw(b.dataset.icon); });

// Raster layer. Patches are [x, y, rx, ry, strength] in a 3x grid offset by (24, 33).
const improved = [[50,80,60,100,1.3],[35,240,30,90,.6],[40,350,35,60,.7],[95,465,100,60,1.1],[200,545,75,60,.8],[150,350,30,60,.5],[160,260,40,90,.3],[200,170,40,60,.3],[140,60,50,40,.4],[285,220,38,45,.7],[190,650,90,50,.4],[240,690,80,60,.45],[310,620,35,90,.5],[380,430,30,55,.6],[430,500,30,90,.35],[140,760,50,25,.4],[350,730,60,60,.3],[510,850,90,22,.6],[450,900,50,40,.35],[400,970,25,50,.4],[720,120,55,50,.65],[825,135,40,60,.9],[930,85,90,25,.7],[1000,120,25,60,.5],[960,165,60,20,.45],[670,370,22,45,.8],[610,450,35,30,.6],[670,490,70,20,1.1],[580,290,18,35,.7],[530,140,80,20,.45],[590,1010,60,25,.6],[790,1070,38,38,.9],[855,1000,20,40,.5],[860,1080,18,60,.4],[740,1220,40,35,.6],[200,1310,70,20,.7],[170,1160,35,20,.6],[330,1390,60,35,.35],[1060,270,70,30,.25],[820,1270,90,60,.12]];
const degraded = [[515,665,40,60,1.2],[590,690,32,36,.7],[1050,530,90,45,1.3],[960,575,80,30,1],[1080,610,40,35,.9],[1140,570,35,45,.7],[890,440,32,36,.95],[530,440,45,20,.65],[540,385,30,16,.65],[770,520,60,45,.4],[740,650,80,24,.65],[840,570,60,20,.6],[940,760,45,24,1.1],[870,755,50,14,.5],[750,800,50,26,.85],[640,800,45,45,.5],[1000,710,100,40,.5],[1010,800,110,22,.65],[640,890,80,34,.6],[600,180,30,60,.35],[560,210,60,20,.25],[1170,110,45,32,.5],[1150,310,45,25,.4],[1160,400,30,40,.5],[1150,500,80,100,.12],[650,245,30,26,.4],[1045,210,18,34,.4],[940,265,36,24,.45],[380,90,90,70,.16],[370,330,60,20,.25],[730,1435,40,34,1.1],[700,1350,50,60,.6],[540,1370,55,45,.45],[500,1420,70,24,.5],[600,1445,50,16,.6],[360,1220,50,45,.5],[680,1080,70,40,.4],[120,1010,150,100,.13],[300,940,90,30,.35],[80,1200,60,60,.2],[180,1090,40,30,.3],[1050,930,120,80,.15],[770,440,40,20,.4]];
const coast = [[1197,950],[1160,1015],[1120,1060],[1070,1105],[1015,1150],[955,1165],[945,1215],[940,1250],[915,1285],[890,1350],[860,1400],[835,1464]];

function hash(x, y, s) {
  let h = Math.imul(x, 374761393) ^ Math.imul(y, 668265263) ^ Math.imul(s, 1274126177);
  h = Math.imul(h ^ (h >>> 13), 1274126177);
  h = Math.imul(h ^ (h >>> 15), 2246822519);
  return ((h ^ (h >>> 16)) >>> 0) / 4294967296;
}
function noise(x, y, size, s) {
  const gx = Math.floor(x / size), gy = Math.floor(y / size);
  let u = x / size - gx, v = y / size - gy;
  u = u * u * (3 - 2 * u); v = v * v * (3 - 2 * v);
  const a = hash(gx, gy, s), b = hash(gx + 1, gy, s), c = hash(gx, gy + 1, s), d = hash(gx + 1, gy + 1, s);
  return (a + (b - a) * u) * (1 - v) + (c + (d - c) * u) * v - .5;
}
const field = (list, x, y) => list.reduce((t, [cx, cy, rx, ry, k]) => {
  const d = ((x - cx) / rx) ** 2 + ((y - cy) / ry) ** 2;
  return d > 6 ? t : t + k * Math.exp(-d * .8);
}, 0);
function coastX(y) {
  if (y < 950) return 1e4;
  for (let i = 1; i < coast.length; i++) {
    const [x0, y0] = coast[i - 1], [x1, y1] = coast[i];
    if (y <= y1) return x0 + (x1 - x0) * (y - y0) / (y1 - y0);
  }
  return 835;
}

const canvas = document.getElementById('map');
const ctx = canvas.getContext('2d');
const img = ctx.createImageData(391, 477);
for (let j = 0; j < 477; j++) for (let i = 0; i < 391; i++) {
  const x = i * 3 + 24, y = j * 3 + 33;
  const south = Math.min(1, Math.max(0, (y - 550) / 350));
  const gap = Math.exp(-(((x - 310) / 130) ** 2) - ((y - 320) / 110) ** 2) * .1;
  const wx = x + noise(i, j, 22, 31) * 50 + noise(i, j, 8, 32) * 50 + noise(i, j, 3, 33) * 35;
  const wy = y + noise(i, j, 22, 41) * 40 + noise(i, j, 8, 42) * 45 + noise(i, j, 3, 43) * 35;
  const clump = s => noise(i, j, 30, s) * .25 + noise(i, j, 12, s + 1) * .4 + noise(i, j, 5, s + 2) * .5 + noise(i, j, 2.3, s + 3) * .5;
  const g = field(improved, wx, wy), p = field(degraded, wx, wy);
  let pg = .11 + south * .07 - gap + g * .95 + clump(3) * (.42 + Math.min(g, .8) * .6) - p * .3;
  let pp = .065 + south * .11 - gap + p * .95 + clump(9) * (.42 + Math.min(p, .8) * .6) - g * .3;
  pg = Math.min(.98, Math.max(.02, pg)); pp = Math.min(.98, Math.max(.015, pp));
  const total = pg + pp;
  if (total > .98) { pg *= .98 / total; pp *= .98 / total; }
  const r = hash(i, j, 77);
  let c = [255, 255, 223];
  if (x < coastX(y) + (hash(i >> 1, j >> 1, 5) - .5) * 9) {
    if (r < pg) c = [0, 100, 0]; else if (r > 1 - pp) c = [153, 40, 120];
  }
  img.data.set([...c, 255], (j * 391 + i) * 4);
}
ctx.putImageData(img, 0, 0);
```
